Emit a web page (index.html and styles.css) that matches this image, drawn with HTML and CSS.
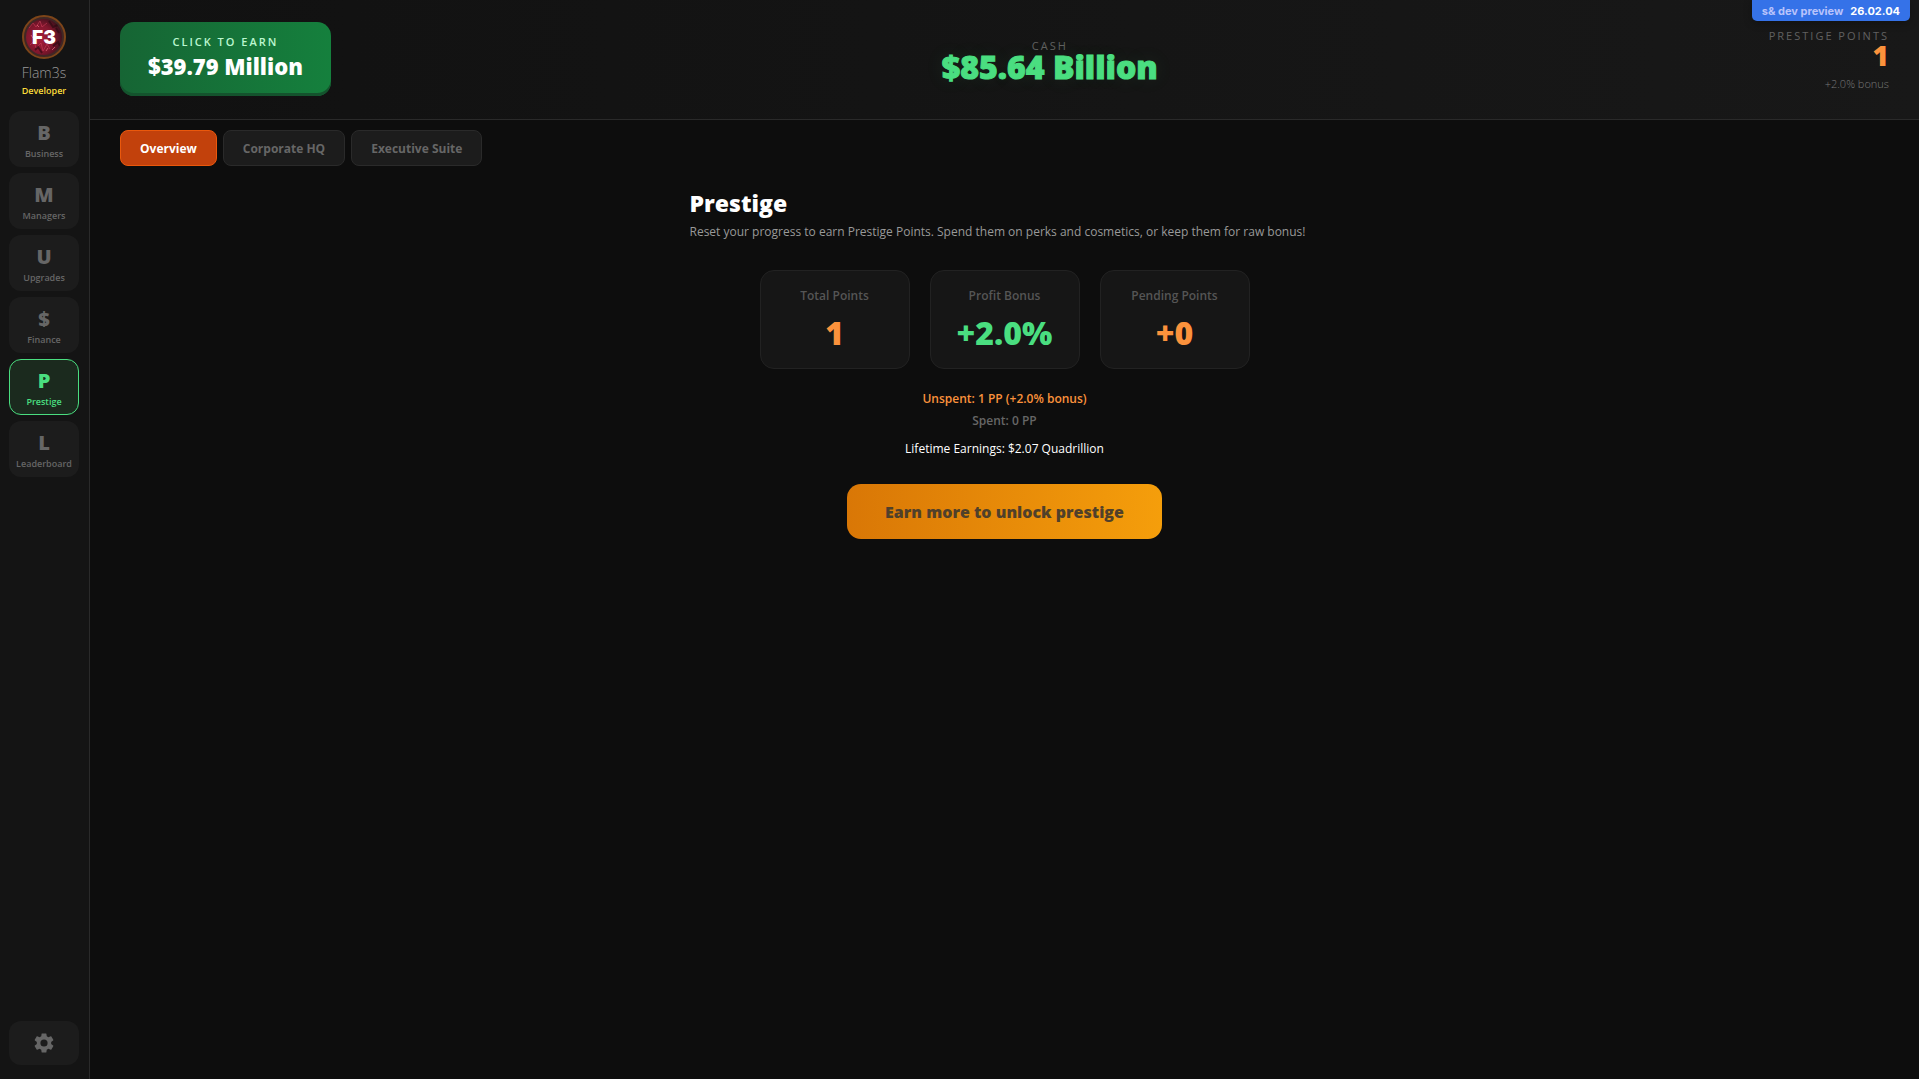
FILE: index.html
```html
<!DOCTYPE html>
<html lang="en">
<head>
  <meta charset="UTF-8" />
  <meta name="viewport" content="width=device-width, initial-scale=1.0"/>
  <title>Prestige</title>
  <link rel="stylesheet" href="styles.css">
</head>
<body>

  <div class="version-badge"><span>s&amp; dev preview</span> <strong>26.02.04</strong></div>

  <div class="app">
    <!-- Sidebar -->
    <aside class="sidebar">
      <div class="profile">
        <svg class="avatar" viewBox="0 0 44 44" role="img" aria-label="Flam3s avatar">
          <defs>
            <radialGradient id="avatarFill" cx="38%" cy="55%" r="65%">
              <stop offset="0" stop-color="#a81f3c"/>
              <stop offset="0.6" stop-color="#80172d"/>
              <stop offset="1" stop-color="#38101a"/>
            </radialGradient>
            <clipPath id="avatarClip"><circle cx="22" cy="22" r="18"/></clipPath>
          </defs>
          <circle cx="22" cy="22" r="21" fill="#402725" stroke="#7d4519" stroke-width="2"/>
          <circle cx="22" cy="22" r="18" fill="url(#avatarFill)"/>
          <g clip-path="url(#avatarClip)">
            <path d="M7 13l4-5 3 4 4-6 2 6 5-4M8 30l4-4 2 7 5-5 2 8 4-7 3 5" fill="none" stroke="#c9405c" stroke-width="1" opacity="0.6"/>
            <path d="M27 6l4 6 5-2M31 31l5-4 2 4M13 35l3-3 4 6M34 13l3 5" fill="none" stroke="#260a11" stroke-width="2" opacity="0.6"/>
            <path d="M15 10l2 2M24 36l2-3M9 20l2 3M30 35l3-3" stroke="#ea6d83" stroke-width="1" opacity="0.7"/>
          </g>
          <text class="avatar-text" x="22" y="29" text-anchor="middle">F3</text>
        </svg>
        <div class="profile-name">Flam3s</div>
        <div class="profile-role">Developer</div>
      </div>

      <nav class="nav">
        <button class="nav-btn"><b>B</b><span>Business</span></button>
        <button class="nav-btn"><b>M</b><span>Managers</span></button>
        <button class="nav-btn"><b>U</b><span>Upgrades</span></button>
        <button class="nav-btn"><b>$</b><span>Finance</span></button>
        <button class="nav-btn active"><b>P</b><span>Prestige</span></button>
        <button class="nav-btn"><b>L</b><span>Leaderboard</span></button>
      </nav>

      <button class="settings-btn" aria-label="Settings">
        <svg width="24" height="24" viewBox="0 0 24 24" fill="currentColor">
          <path d="M19.14 12.94c.04-.3.06-.61.06-.94 0-.32-.02-.64-.07-.94l2.03-1.58a.49.49 0 0 0 .12-.61l-1.92-3.32a.488.488 0 0 0-.59-.22l-2.39.96c-.5-.38-1.03-.7-1.62-.94l-.36-2.54a.484.484 0 0 0-.48-.41h-3.84c-.24 0-.43.17-.47.41l-.36 2.54c-.59.24-1.13.57-1.62.94l-2.39-.96c-.22-.08-.47 0-.59.22L2.74 8.87c-.12.21-.08.47.12.61l2.03 1.58c-.05.3-.09.63-.09.94s.02.64.07.94l-2.03 1.58a.49.49 0 0 0-.12.61l1.92 3.32c.12.22.37.29.59.22l2.39-.96c.5.38 1.03.7 1.62.94l.36 2.54c.05.24.24.41.48.41h3.84c.24 0 .44-.17.47-.41l.36-2.54c.59-.24 1.13-.56 1.62-.94l2.39.96c.22.08.47 0 .59-.22l1.92-3.32c.12-.22.07-.47-.12-.61l-2.01-1.58zM12 15.6A3.6 3.6 0 1 1 12 8.4a3.6 3.6 0 0 1 0 7.2z"/>
        </svg>
      </button>
    </aside>

    <div class="main">
      <!-- Top bar -->
      <header class="topbar">
        <button class="earn-btn">
          <span class="earn-label">CLICK TO EARN</span>
          <span class="earn-value">$39.79 Million</span>
        </button>
        <div class="cash">
          <div class="cash-label">CASH</div>
          <div class="cash-value">$85.64 Billion</div>
        </div>
        <div class="points">
          <div class="points-label">PRESTIGE POINTS</div>
          <div class="points-value">1</div>
          <div class="points-bonus">+2.0% bonus</div>
        </div>
      </header>

      <!-- Tabs -->
      <div class="tabs">
        <button class="tab active">Overview</button>
        <button class="tab">Corporate HQ</button>
        <button class="tab">Executive Suite</button>
      </div>

      <!-- Prestige overview -->
      <main class="content">
        <div class="intro">
          <h1>Prestige</h1>
          <p>Reset your progress to earn Prestige Points. Spend them on perks and cosmetics, or keep them for raw bonus!</p>
        </div>

        <div class="stats">
          <div class="stat">
            <div class="stat-label">Total Points</div>
            <div class="stat-value orange">1</div>
          </div>
          <div class="stat">
            <div class="stat-label">Profit Bonus</div>
            <div class="stat-value green">+2.0%</div>
          </div>
          <div class="stat">
            <div class="stat-label">Pending Points</div>
            <div class="stat-value orange">+0</div>
          </div>
        </div>

        <div class="unspent">Unspent: 1 PP (+2.0% bonus)</div>
        <div class="spent">Spent: 0 PP</div>
        <div class="lifetime">Lifetime Earnings: $2.07 Quadrillion</div>

        <button class="prestige-btn">Earn more to unlock prestige</button>
      </main>
    </div>
  </div>

</body>
</html>
```
FILE: styles.css
```css
:root {
  --green: #4ade80;
  --orange: #fb923c;
  --muted: #666;
}

* {
  box-sizing: border-box;
  margin: 0;
  padding: 0;
  font-family: 'Open Sans', 'Noto Sans', sans-serif;
}

body {
  background: #0d0d0d;
  color: white;
}

button {
  border: none;
  cursor: pointer;
}

.app {
  display: flex;
  min-height: 100vh;
}

/* Version badge over the top bar */
.version-badge {
  position: absolute;
  top: 0;
  right: 9px;
  height: 21px;
  padding: 0 10px;
  display: flex;
  align-items: center;
  gap: 7px;
  background: #3572e8;
  border-radius: 0 0 5px 5px;
  box-shadow: 0 2px 8px rgba(0, 0, 0, 0.3);
}

.version-badge span,
.version-badge strong {
  font-family: Inter, sans-serif;
  font-size: 11px;
  font-weight: 700;
  line-height: 20px;
}

.version-badge span {
  color: #b9c3fb;
}

/* Sidebar */
.sidebar {
  width: 90px;
  flex-shrink: 0;
  display: flex;
  flex-direction: column;
  align-items: center;
  padding: 15px 10px 14px 9px;
  background: #141414;
  border-right: 1px solid #2a2a2a;
}

.profile {
  text-align: center;
  margin-bottom: 13px;
}

.avatar {
  display: block;
  width: 44px;
  height: 44px;
  margin: 0 auto 4px;
}

.avatar-text {
  font-family: Inter, sans-serif;
  font-size: 19px;
  font-weight: 900;
  fill: white;
}

.profile-name {
  font-size: 14px;
  font-weight: 300;
  line-height: 20px;
  color: #999;
}

.profile-role {
  font-size: 9px;
  font-weight: 600;
  line-height: 15px;
  color: #fddc3a;
}

.nav {
  width: 100%;
  display: flex;
  flex-direction: column;
  gap: 6px;
}

.nav-btn {
  height: 56px;
  padding-top: 5px;
  display: flex;
  flex-direction: column;
  align-items: center;
  justify-content: center;
  background: #1c1c1c;
  border: 1px solid transparent;
  border-radius: 12px;
  color: var(--muted);
}

.nav-btn b {
  font-size: 20px;
  font-weight: 800;
  line-height: 24px;
}

.nav-btn span {
  font-size: 9px;
  font-weight: 600;
  line-height: 18px;
}

.nav-btn.active {
  background: #1b2a1e;
  border-color: var(--green);
  color: var(--green);
}

.settings-btn {
  width: 100%;
  height: 44px;
  margin-top: auto;
  display: flex;
  align-items: center;
  justify-content: center;
  background: #1c1c1c;
  border-radius: 12px;
  color: var(--muted);
}

.main {
  flex: 1;
}

/* Top bar */
.topbar {
  height: 120px;
  display: flex;
  justify-content: space-between;
  align-items: center;
  padding: 0 30px 1px;
  background: linear-gradient(90deg, #111, #181818);
  border-bottom: 1px solid #2a2a2a;
}

.earn-btn {
  height: 74px;
  padding: 0 28px 4px;
  display: flex;
  flex-direction: column;
  align-items: center;
  justify-content: center;
  background: linear-gradient(90deg, #166534, #15803d);
  border-radius: 14px;
  box-shadow: inset 0 -3px 0 #14532d;
}

.earn-label {
  font-size: 11px;
  font-weight: 600;
  letter-spacing: 2px;
  line-height: 18px;
  color: #bbf7d0;
}

.earn-value {
  font-size: 22px;
  font-weight: 800;
  line-height: 30px;
  color: white;
}

.cash {
  padding-top: 4px;
  text-align: center;
}

.cash-label {
  font-size: 11px;
  letter-spacing: 2px;
  line-height: 12px;
  color: #606060;
}

.cash-value {
  font-size: 32px;
  font-weight: 800;
  line-height: 30px;
  color: var(--green);
  -webkit-text-stroke: 1px currentColor;
  text-shadow: 0 0 20px rgba(74, 222, 128, 0.1);
}

.points {
  padding-top: 12px;
  text-align: right;
}

.points-label {
  font-size: 11px;
  letter-spacing: 2px;
  line-height: 12px;
  color: #606060;
}

.points-value {
  font-size: 28px;
  font-weight: 800;
  line-height: 26px;
  color: var(--orange);
}

.points-bonus {
  font-size: 11px;
  font-weight: 300;
  line-height: 32px;
  color: #777;
}

/* Tabs */
.tabs {
  display: flex;
  gap: 6px;
  padding: 10px 30px;
}

.tab {
  height: 36px;
  padding: 0 19px;
  background: #1c1c1c;
  border: 1px solid #2a2a2a;
  border-radius: 8px;
  font-size: 12px;
  font-weight: 700;
  color: var(--muted);
}

.tab.active {
  background: #c2410c;
  border-color: #ea580c;
  color: white;
}

/* Prestige overview */
.content {
  display: flex;
  flex-direction: column;
  align-items: center;
  padding: 10px 30px;
}

.intro {
  width: 100%;
  max-width: 630px;
  margin-bottom: 27px;
}

.intro h1 {
  font-size: 23px;
  font-weight: 800;
  line-height: 35px;
}

.intro p {
  font-size: 12px;
  line-height: 22px;
  color: #999;
}

.stats {
  display: flex;
  gap: 20px;
  margin-bottom: 19px;
}

.stat {
  width: 150px;
  height: 99px;
  padding-top: 16px;
  text-align: center;
  background: #161616;
  border: 1px solid #222;
  border-radius: 14px;
}

.stat-label {
  font-size: 12px;
  font-weight: 600;
  line-height: 18px;
  color: #555;
}

.stat-value {
  margin-top: 8px;
  font-size: 32px;
  font-weight: 800;
  line-height: 40px;
}

.green {
  color: var(--green);
}

.orange {
  color: var(--orange);
}

.unspent,
.spent,
.lifetime {
  font-size: 12px;
  line-height: 22px;
}

.unspent {
  font-weight: 600;
  color: var(--orange);
}

.spent {
  font-weight: 600;
  color: var(--muted);
}

.lifetime {
  margin: 6px 0 24px;
}

.prestige-btn {
  height: 55px;
  padding: 0 38px;
  background: linear-gradient(90deg, #d97706, #f59e0b);
  border-radius: 14px;
  font-size: 16px;
  font-weight: 800;
  color: #50402a;
}
```
